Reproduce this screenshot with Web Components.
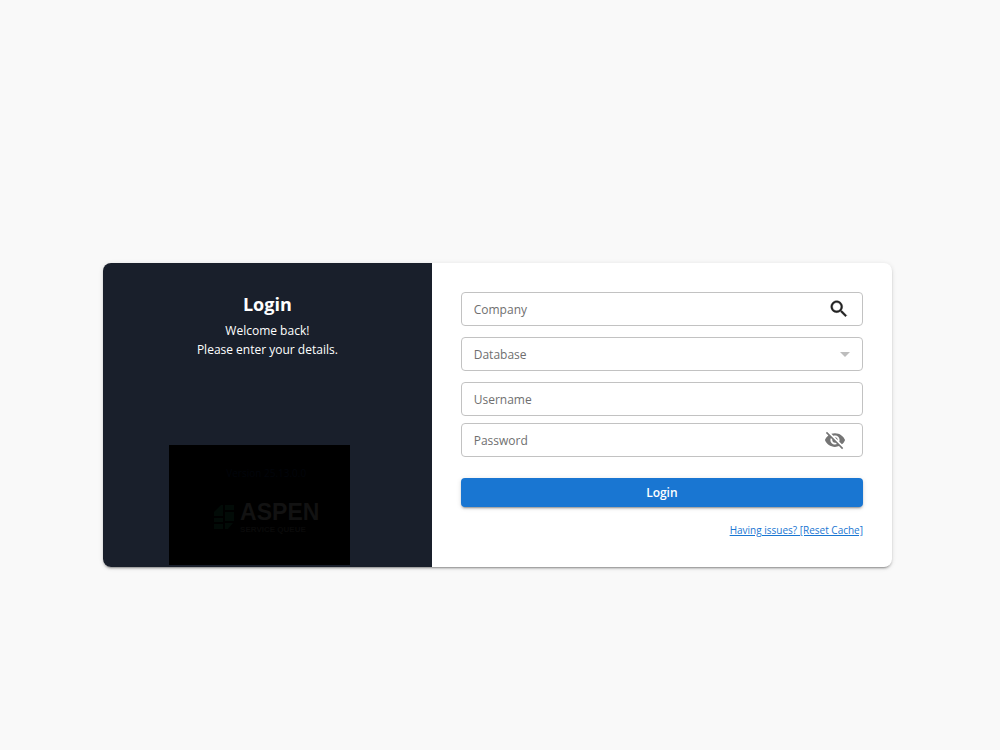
<!DOCTYPE html>
<html lang="en">
<head>
<meta charset="utf-8">
<meta name="viewport" content="width=device-width, initial-scale=1">
<title>Login</title>
<style>
  body { margin: 0; background: #f9f9f9; font-family: "Segoe UI", "Open Sans", "Noto Sans", sans-serif; }
</style>
</head>
<body>
<login-page>
  <login-welcome slot="aside"></login-welcome>
  <login-form slot="main"></login-form>
</login-page>

<template id="page-template">
  <style>
    :host { display: flex; justify-content: center; align-items: center; box-sizing: border-box; min-height: 100vh; padding: 80px 5px 0 0; }
    main { display: grid; grid-template-columns: 5fr 7fr; width: 79.3%; border-radius: 8px; overflow: hidden; background: #fff; box-shadow: 0 3px 1px -2px rgba(0,0,0,.2), 0 2px 2px rgba(0,0,0,.14), 0 1px 5px rgba(0,0,0,.12); }
    @media (max-width: 640px) { main { grid-template-columns: 1fr; } }
  </style>
  <main><slot name="aside"></slot><slot name="main"></slot></main>
</template>

<template id="welcome-template">
  <style>
    :host { display: flex; flex-direction: column; justify-content: space-between; background: #191f2b; color: #fff; }
    header { padding-top: 28px; text-align: center; }
    h1 { margin: 0 0 4px; font-size: 18px; line-height: 26px; font-weight: 700; }
    p { margin: 0; font-size: 12px; line-height: 19px; }
    aspen-banner { margin: 0 0 2px 20%; }
  </style>
  <header>
    <h1>Login</h1>
    <p>Welcome back!</p>
    <p>Please enter your details.</p>
  </header>
  <aspen-banner></aspen-banner>
</template>

<template id="banner-template">
  <style>
    :host { display: flex; flex-direction: column; align-items: center; box-sizing: border-box; width: 181px; height: 120px; padding: 20px 0 0 14px; background: #000; }
    .version { font-size: 10px; line-height: 16px; color: #02050b; }
    .brand { display: flex; align-items: center; gap: 5px; margin-top: 18px; }
    svg { display: block; width: 22px; height: 26px; }
    .name { font: 700 23px/26px "Liberation Sans", Arial, sans-serif; color: #121212; }
    .product { font: 700 8px/10px "Liberation Sans", Arial, sans-serif; color: #0a0a0a; }
  </style>
  <div class="version">Version 25.13.0.0</div>
  <div class="brand">
    <svg viewBox="0 0 22 26" fill="#020b07" aria-hidden="true">
      <path d="M1 8L8 1H10V12H1ZM12 1H21V6H12ZM12 8H21V17H12ZM1 14H10V18H1ZM1 20H10V25H1ZM12 19H20L15 25H12Z"/>
    </svg>
    <div><div class="name">ASPEN</div><div class="product">SERVICE QUEUE</div></div>
  </div>
</template>

<template id="form-template">
  <style>
    :host { display: block; padding: 29px; }
    form { display: flex; flex-direction: column; }
    outlined-field { margin-bottom: 11px; }
    outlined-field.tight { margin-bottom: 7px; }
    outlined-field:last-of-type { margin-bottom: 21px; }
    button { height: 29px; padding: 0; border: 0; border-radius: 4px; background: #1976d2; color: #fff; font: 600 12px/29px "Segoe UI", "Open Sans", sans-serif; box-shadow: 0 3px 1px -2px rgba(0,0,0,.2), 0 2px 2px rgba(0,0,0,.14), 0 1px 5px rgba(0,0,0,.12); cursor: pointer; }
    a { align-self: flex-end; margin-top: 15px; font-size: 10px; line-height: 16px; color: #1976d2; text-decoration: underline; }
  </style>
  <form>
    <outlined-field label="Company" kind="search"></outlined-field>
    <outlined-field label="Database" kind="select"></outlined-field>
    <outlined-field class="tight" label="Username" kind="text"></outlined-field>
    <outlined-field label="Password" kind="password"></outlined-field>
    <button type="button">Login</button>
    <a href="#reset">Having issues? [Reset Cache]</a>
  </form>
</template>

<template id="field-template">
  <style>
    :host { display: flex; align-items: center; box-sizing: border-box; height: 34px; padding: 0 12px; border: 1px solid #c2c2c2; border-radius: 4px; background: #fff; }
    :host(:focus-within) { border-color: #1976d2; }
    input, select { flex: 1; min-width: 0; box-sizing: border-box; height: 32px; padding: 1px 0 0; border: 0; outline: 0; background: transparent; appearance: none; color: #6f6f6f; font: 400 12px/30px "Segoe UI", "Open Sans", sans-serif; }
    input::placeholder { color: #6f6f6f; opacity: 1; }
    button { display: flex; padding: 0; border: 0; background: none; cursor: pointer; }
    svg { display: block; }
  </style>
</template>

<script>
  const stamp = (host, id) => {
    const root = host.attachShadow({ mode: "open" });
    root.append(document.getElementById(id).content.cloneNode(true));
    return root;
  };
  const define = (name, id) =>
    customElements.define(name, class extends HTMLElement {
      constructor() { super(); stamp(this, id); }
    });

  const adornments = {
    text: "",
    search: `<button type="button" aria-label="Search"><svg width="22" height="22" viewBox="0 0 24 24" fill="#212121" stroke="#212121" stroke-width=".4"><path d="M15.5 14h-.79l-.28-.27C15.41 12.59 16 11.11 16 9.5 16 5.91 13.09 3 9.5 3S3 5.91 3 9.5 5.91 16 9.5 16c1.61 0 3.09-.59 4.23-1.57l.27.28v.79l5 4.99L20.49 19l-4.99-5zm-6 0C7.01 14 5 11.99 5 9.5S7.01 5 9.5 5 14 7.01 14 9.5 11.99 14 9.5 14z"/></svg></button>`,
    select: `<svg width="10" height="5" viewBox="0 0 10 5" fill="#bdbdbd" aria-hidden="true"><path d="M0 0h10L5 5z"/></svg>`,
    password: `<button type="button" aria-label="Show password" style="margin-right:4px"><svg width="22" height="22" viewBox="0 0 24 24" fill="#757575"><path d="M12 7c2.76 0 5 2.24 5 5 0 .65-.13 1.26-.36 1.83l2.92 2.92c1.51-1.26 2.7-2.89 3.43-4.75-1.73-4.39-6-7.5-11-7.5-1.4 0-2.74.25-3.98.7l2.16 2.16C10.74 7.13 11.35 7 12 7zM2 4.27l2.28 2.28.46.46C3.08 8.3 1.78 10.02 1 12c1.73 4.39 6 7.5 11 7.5 1.55 0 3.03-.3 4.38-.84l.42.42L19.73 22 21 20.73 3.27 3 2 4.27zM7.53 9.8l1.55 1.55c-.05.21-.08.43-.08.65 0 1.66 1.34 3 3 3 .22 0 .44-.03.65-.08l1.55 1.55c-.67.33-1.41.53-2.2.53-2.76 0-5-2.24-5-5 0-.79.2-1.53.53-2.2zm4.31-.78l3.15 3.15.02-.16c0-1.66-1.34-3-3-3l-.17.01z"/></svg></button>`
  };

  customElements.define("outlined-field", class extends HTMLElement {
    constructor() { super(); stamp(this, "field-template"); }
    connectedCallback() {
      if (this.control) return;
      const kind = this.getAttribute("kind");
      const label = this.getAttribute("label");
      this.control = document.createElement(kind === "select" ? "select" : "input");
      this.control.setAttribute("aria-label", label);
      if (kind === "select") {
        this.control.add(new Option(label, ""));
      } else {
        this.control.type = kind === "password" ? "password" : "text";
        this.control.placeholder = label;
      }
      this.shadowRoot.append(this.control);
      this.control.insertAdjacentHTML("afterend", adornments[kind]);
    }
  });
  define("aspen-banner", "banner-template");
  define("login-welcome", "welcome-template");
  define("login-form", "form-template");
  define("login-page", "page-template");
</script>
</body>
</html>
